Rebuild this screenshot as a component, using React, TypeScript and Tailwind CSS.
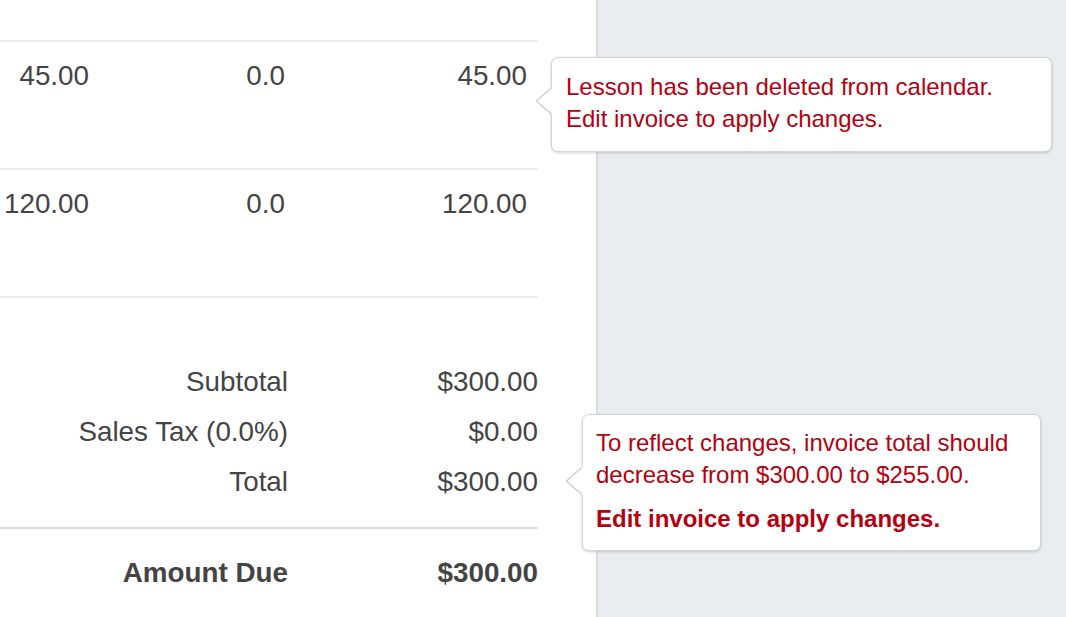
import React from 'react';

const font = { fontFamily: '"Liberation Sans", Arial, Helvetica, sans-serif' };

interface LineRow {
  rate: string;
  tax: string;
  amount: string;
}

const rows: LineRow[] = [
  { rate: '45.00', tax: '0.0', amount: '45.00' },
  { rate: '120.00', tax: '0.0', amount: '120.00' },
];

const Arrow = ({ className }: { className: string }) => (
  <svg className={className} width="18" height="28" viewBox="0 0 18 28">
    <path d="M18 0 L16 1 Q9 7 1.5 14 Q9 21 16 27 L18 28 Z" fill="white" />
    <path d="M16.5 1 Q9 7 1.5 14 Q9 21 16.5 27" fill="none" stroke="#cfcfd2" strokeWidth="1.5" />
  </svg>
);

export default function App() {
  return (
    <div className="flex h-screen w-full overflow-hidden text-[#444]" style={font}>
      <div className="relative w-[598px] shrink-0 bg-white border-r-2 border-[#dcdce0]">
        <div className="w-[538px] pt-[40px]">
          {rows.map((r, i) => (
            <div key={i} className="flex h-[128px] border-t-2 border-[#ececec] pt-[18px] text-[27.8px] leading-[32px]">
              <div className="w-[89px] text-right whitespace-nowrap">{r.rate}</div>
              <div className="w-[196px] text-right">{r.tax}</div>
              <div className="w-[242px] text-right">{r.amount}</div>
            </div>
          ))}
          <div className="border-t-2 border-[#ececec] pt-[59px] text-[27.8px] leading-[50px]">
            <div className="flex">
              <div className="w-[288px] text-right">Subtotal</div>
              <div className="flex-1 text-right">$300.00</div>
            </div>
            <div className="flex">
              <div className="w-[288px] text-right">Sales Tax (0.0%)</div>
              <div className="flex-1 text-right">$0.00</div>
            </div>
            <div className="flex">
              <div className="w-[288px] text-right">Total</div>
              <div className="flex-1 text-right">$300.00</div>
            </div>
          </div>
          <div className="mt-[20px] border-t-2 border-[#dadada] pt-[19px] text-[27.8px] leading-[50px] font-bold">
            <div className="flex">
              <div className="w-[288px] text-right">Amount Due</div>
              <div className="flex-1 text-right">$300.00</div>
            </div>
          </div>
        </div>
      </div>
      <div className="flex-1 bg-[#ebecf0]" />

      <div className="absolute left-[551px] top-[57px] w-[501px] h-[95px] rounded-[7px] border border-[#d4d4d7] bg-white pl-[14px] pt-[13px] text-[24px] leading-[32px] text-[#b5000f] shadow-[0_1px_3px_rgba(0,0,0,0.18)]">
        <Arrow className="absolute left-[-17px] top-[29px]" />
        <p>Lesson has been deleted from calendar.</p>
        <p>Edit invoice to apply changes.</p>
      </div>

      <div className="absolute left-[582px] top-[414px] w-[459px] h-[137px] rounded-[7px] border border-[#d4d4d7] bg-white pl-[13px] pt-[12px] text-[24px] leading-[32px] text-[#b5000f] shadow-[0_1px_3px_rgba(0,0,0,0.18)]">
        <Arrow className="absolute left-[-18px] top-[52px]" />
        <p>To reflect changes, invoice total should</p>
        <p>decrease from $300.00 to $255.00.</p>
        <p className="mt-[12px] font-bold">Edit invoice to apply changes.</p>
      </div>
    </div>
  );
}
